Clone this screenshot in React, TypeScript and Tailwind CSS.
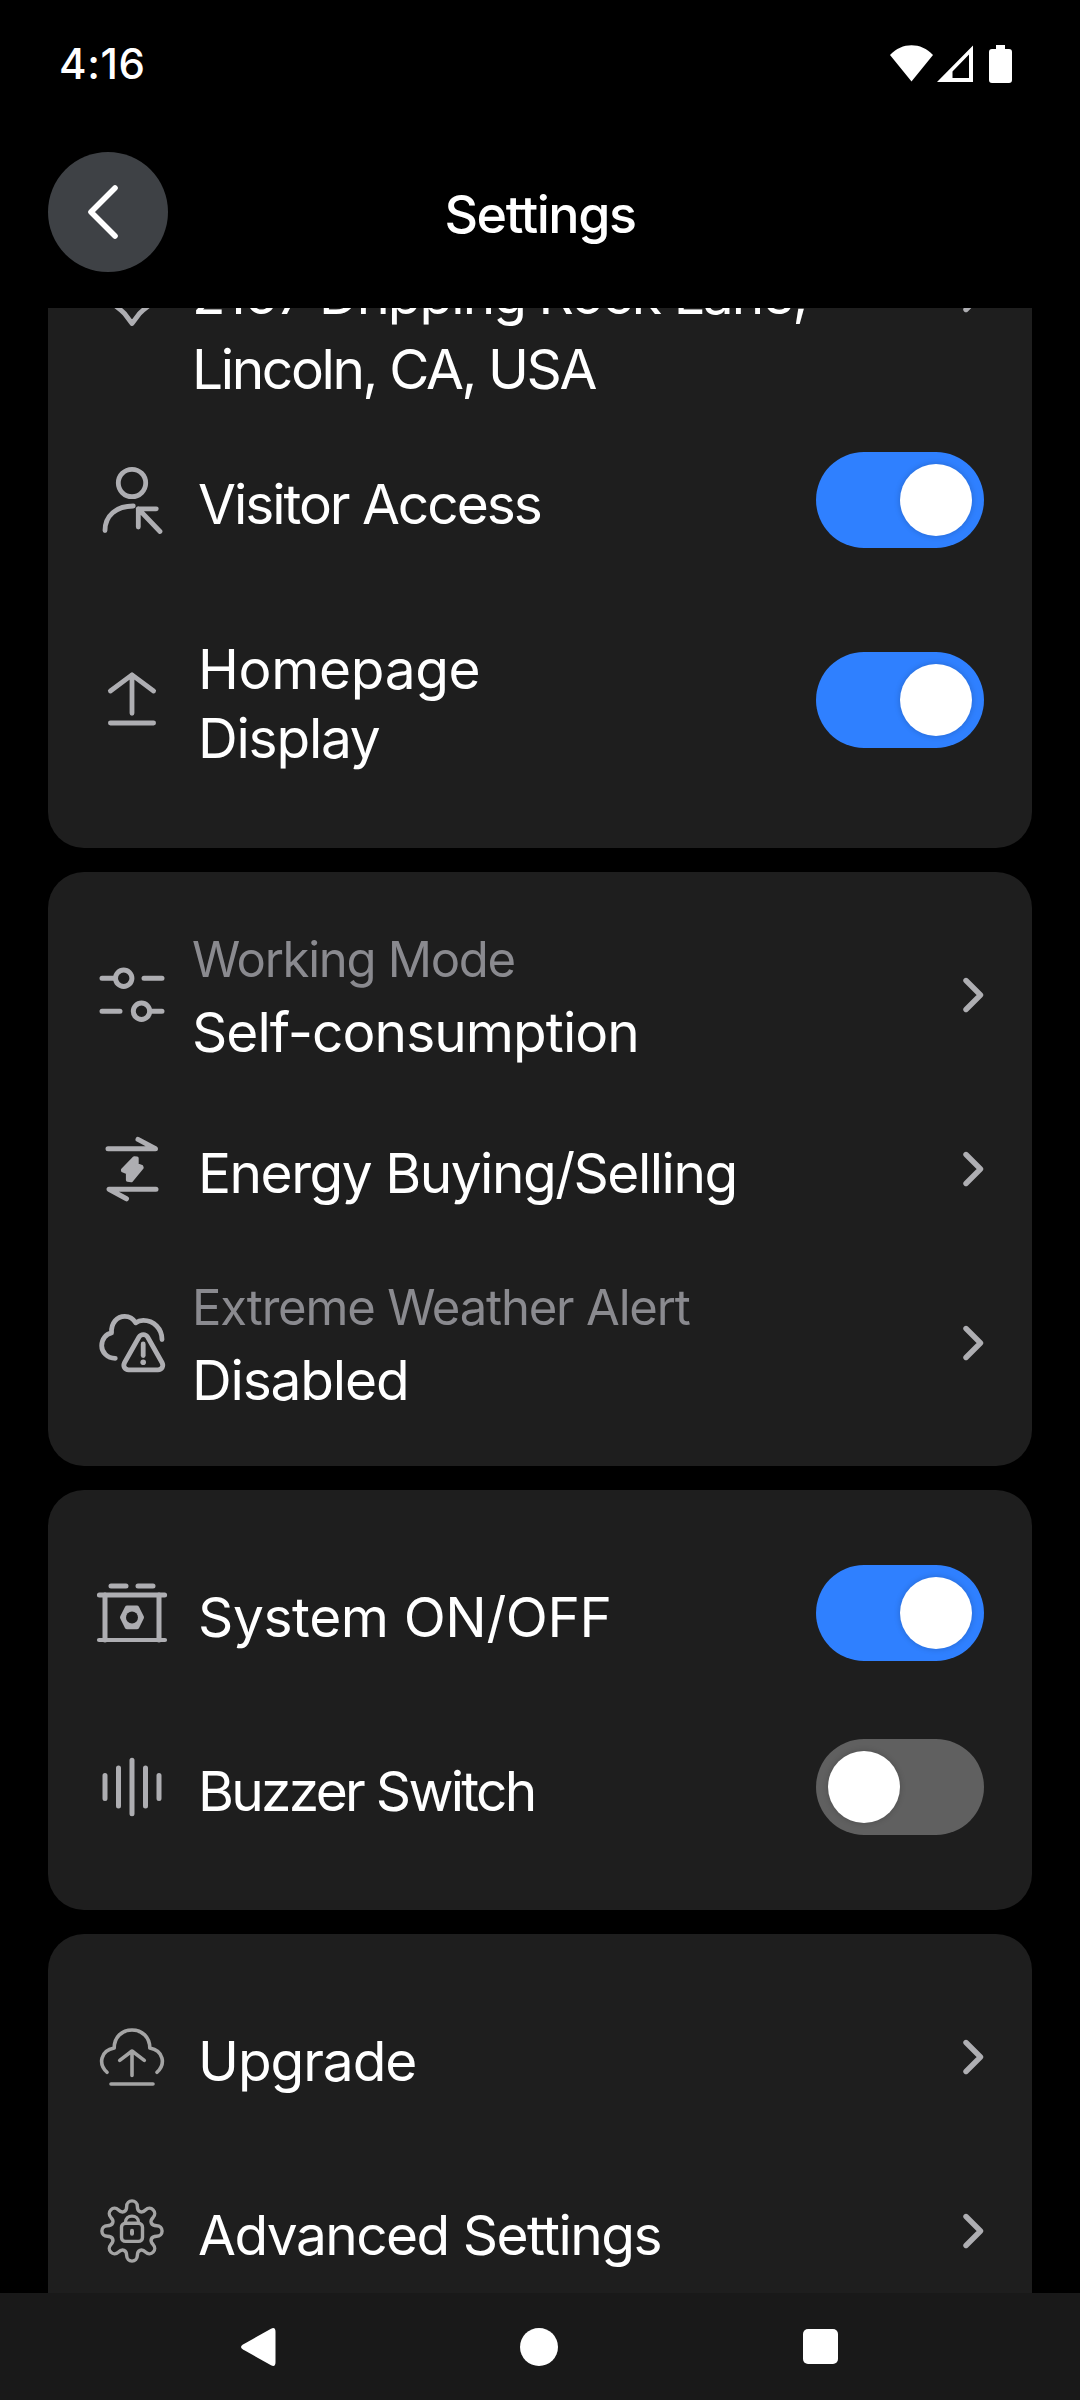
import { ReactNode, useState } from "react";
import clsx from "clsx";

interface IconProps {
  children: ReactNode;
  color?: string;
  width?: number;
}

function Icon({ children, color = "#aeaeb2", width = 4.8 }: IconProps) {
  return (
    <svg
      viewBox="0 0 72 72"
      className="size-[72px] shrink-0"
      fill="none"
      stroke={color}
      strokeWidth={width}
      strokeLinecap="round"
      strokeLinejoin="round"
    >
      {children}
    </svg>
  );
}

// eight rounded teeth around the centre of the 72px icon box
function gearPath() {
  const at = (x: number, y: number, step: number) => {
    const a = (step * Math.PI) / 4;
    const px = 36 + x * Math.cos(a) - y * Math.sin(a);
    const py = 36 + x * Math.sin(a) + y * Math.cos(a);
    return `${px.toFixed(2)} ${py.toFixed(2)}`;
  };
  let d = `M${at(-5.3, -24.8, 0)}`;
  for (let i = 0; i < 8; i++) {
    d += `A5.3 5.3 0 0 1 ${at(5.3, -24.8, i)}`;
    d += `C${at(5.3, -19, i)} ${at(-5.3, -19, i + 1)} ${at(-5.3, -24.8, i + 1)}`;
  }
  return d + "Z";
}

const PinIcon = () => (
  <Icon>
    <path d="M36 64.5L28.5 54.5Q25 51 19 46.5C5 32 14 8 36 8S67 32 53 46.5Q47 51 43.5 54.5Z" />
  </Icon>
);

const VisitorIcon = () => (
  <Icon>
    <circle cx="36" cy="19" r="13.7" />
    <path d="M9 66.5C9 52 20 42 37.3 42M42.3 63V44.8H60.3M42.3 44.8L64 67.5" />
  </Icon>
);

const HomepageIcon = () => (
  <Icon width={4.8}>
    <path d="M14.4 27L36 10.8L57.6 27M36 10.8V49.3M14.4 59H57.6" />
  </Icon>
);

const ModeIcon = () => (
  <Icon width={5}>
    <circle cx="27.7" cy="19.3" r="8.2" />
    <circle cx="45.5" cy="52.3" r="8.2" />
    <path d="M6 19.3H19M48 19.3H66M6 52.3H24M54 52.3H66" />
  </Icon>
);

const EnergyIcon = () => (
  <Icon width={5}>
    <path d="M12 15.7H59.5L42 6.4M60 56.3H13L30.5 65.8" />
    <path
      d="M38.2 25L41 25.2V31.8L45.6 33.6L46 34.6L35.3 47.6L31.6 47V39.8L26.8 37.8L26.6 37Z"
      fill="#aeaeb2"
      strokeWidth="3.4"
    />
  </Icon>
);

const WeatherIcon = () => (
  <Icon width={4.8}>
    <path d="M19.3 51.3C11 51.3 5.7 45 5.7 38.7C5.7 32 10 27 15.5 25.8C15 16 21 9.3 28.8 9.3C33.5 9.3 37.5 12 39.7 15.8C42 14 44.5 13.4 47.3 13.4C58 13.4 66 22 66 32.5" />
    <path d="M43 30L28.6 55.5C26.6 59.2 28.8 62.8 32.6 62.8H62C65.8 62.8 68 59.2 66 55.5L51.6 30C49.6 26.8 45 26.8 43 30Z" />
    <path d="M47.2 37V48.5" />
    <circle cx="47.2" cy="55.2" r="2.8" fill="#aeaeb2" stroke="none" />
  </Icon>
);

const SystemIcon = () => (
  <Icon width={5}>
    <path d="M15 9H30M42 9H57M3.4 18H68.6" />
    <path d="M9 18V63M63 18V63" />
    <path d="M3 63H69" strokeWidth="4.2" />
    <path
      d="M31.2 31H40.8L45.5 40.4L40.8 49.8H31.2L26.5 40.4Z"
      fill="#aeaeb2"
    />
    <circle cx="36" cy="40.4" r="6" fill="#1e1e1e" stroke="none" />
  </Icon>
);

const BuzzerIcon = () => (
  <Icon width={5}>
    <path d="M9 24.5V47.5M22.5 17V55M36 9.3V62.7M49.5 17V55M63 24.5V47.5" />
  </Icon>
);

const UpgradeIcon = () => (
  <Icon color="#a4a4a4" width={3.6}>
    <path d="M11 51.3C2 43 4.5 29.5 18.2 27C18.2 16 26 9 36 9S53.8 16 53.8 27C67.5 29.5 70 43 61 51.3" />
    <path d="M23.7 39.4L36 30L48.3 39.4M36 30.5V54.5M15 63H57" />
  </Icon>
);

const AdvancedIcon = () => (
  <Icon color="#a4a4a4" width={3.4}>
    <path d={gearPath()} />
    <rect x="25.5" y="28.2" width="21" height="18.2" rx="4" />
    <path d="M29.3 28C29.3 18.8 42.7 18.8 42.7 28" />
    <path d="M36 35.8V38.8" strokeWidth="4" />
  </Icon>
);

function Chevron() {
  return (
    <svg
      viewBox="0 0 24 40"
      className="h-10 w-6 shrink-0"
      fill="none"
      stroke="#aeaeb2"
      strokeWidth="5.4"
      strokeLinecap="round"
      strokeLinejoin="round"
    >
      <path d="M6 5.5L20.5 20L6 34.5" />
    </svg>
  );
}

function Toggle({ initial }: { initial: boolean }) {
  const [on, setOn] = useState(initial);

  return (
    <button
      type="button"
      role="switch"
      aria-checked={on}
      onClick={() => setOn(!on)}
      className={clsx(
        "flex h-24 w-[168px] shrink-0 items-center rounded-full px-3",
        on ? "justify-end bg-[#2f80ff]" : "justify-start bg-[#606060]"
      )}
    >
      <span className="size-[72px] rounded-full bg-white shadow-[0_0_6px_rgba(0,0,0,0.2)]" />
    </button>
  );
}

interface RowProps {
  icon: ReactNode;
  children: ReactNode;
  label?: ReactNode;
  action?: ReactNode;
  className?: string;
}

function Row({ icon, children, label, action, className = "h-[174px]" }: RowProps) {
  return (
    <div className={clsx("flex items-center", className)}>
      {icon}
      {label ? (
        <div className="flex-1 pt-1 pl-6 text-[55px] leading-[75px]">
          <div className="text-[49px] leading-[70px] text-[#8a8a8f]">{label}</div>
          {children}
        </div>
      ) : (
        <div className="flex-1 pt-2 pl-[30px] text-[55px] leading-[69px]">{children}</div>
      )}
      {action || <Chevron />}
    </div>
  );
}

function Card({ children, className }: { children: ReactNode; className?: string }) {
  return (
    <section className={clsx("shrink-0 rounded-[36px] bg-[#1e1e1e] px-12 py-9", className)}>
      {children}
    </section>
  );
}

export default function App() {
  return (
    <div className="flex h-[2400px] w-[1080px] flex-col overflow-hidden bg-black font-['Inter',sans-serif] text-white">
      <div className="flex h-32 shrink-0 items-center justify-between pr-[68px] pl-[59px]">
        <span className="text-[42px] leading-[60px] font-medium tracking-[0.015em]">4:16</span>
        <svg viewBox="0 0 122 38" className="h-[38px] w-[122px]" fill="#fff">
          <path d="M0 10C12-3 31-3 43 10L21.5 36.5Z" />
          <path d="M83 .5V37H47ZM79 9.5L62.5 26.5V33H79Z" fillRule="evenodd" />
          <path d="M106 0H115V4H119Q122 4 122 7V35Q122 38 119 38H102Q99 38 99 35V7Q99 4 102 4H106Z" />
        </svg>
      </div>

      <header className="grid h-[180px] shrink-0 grid-cols-[120px_1fr_120px] items-start px-12 pt-6">
        <button type="button" className="flex size-[120px] items-center justify-center rounded-full bg-[#3e4145]">
          <svg
            viewBox="0 0 60 60"
            className="size-[60px]"
            fill="none"
            stroke="#fff"
            strokeWidth="5.6"
            strokeLinecap="round"
            strokeLinejoin="round"
          >
            <path d="M37 6L13 30L37 54" />
          </svg>
        </button>
        <h1 className="pt-[31px] text-center text-[52px] font-medium leading-[64px] tracking-[-0.028em]">
          Settings
        </h1>
      </header>

      <main className="flex min-h-0 flex-1 flex-col gap-6 overflow-hidden px-12">
        {/* scrolled up, so the address row starts behind the header */}
        <Card className="-mt-[167px] h-[707px]">
          <Row icon={<PinIcon />} label={"\u00a0"} className="h-[236px]">
            <p className="w-[640px] whitespace-nowrap">
              <span className="tracking-[-0.035em]">2167 Dripping Rock Lane,</span>
              <br />
              <span className="tracking-[-0.043em]">Lincoln, CA, USA</span>
            </p>
          </Row>
          <Row icon={<VisitorIcon />} action={<Toggle initial={true} />}>
            <span className="tracking-[-0.037em]">Visitor Access</span>
          </Row>
          <Row icon={<HomepageIcon />} action={<Toggle initial={true} />} className="h-[226px]">
            <span className="tracking-[-0.006em]">Homepage</span>
            <br />
            <span className="tracking-[-0.022em]">Display</span>
          </Row>
        </Card>

        <Card>
          <Row icon={<ModeIcon />} label={<span className="tracking-[-0.026em]">Working Mode</span>}>
            <span className="tracking-[-0.017em]">Self-consumption</span>
          </Row>
          <Row icon={<EnergyIcon />}>
            <span className="tracking-[-0.027em]">Energy Buying/Selling</span>
          </Row>
          <Row
            icon={<WeatherIcon />}
            label={<span className="tracking-[-0.024em]">Extreme Weather Alert</span>}
          >
            <span className="tracking-[-0.021em]">Disabled</span>
          </Row>
        </Card>

        <Card>
          <Row icon={<SystemIcon />} action={<Toggle initial={true} />}>
            <span className="tracking-[-0.007em]">System ON/OFF</span>
          </Row>
          <Row icon={<BuzzerIcon />} action={<Toggle initial={false} />}>
            <span className="tracking-[-0.049em]">Buzzer Switch</span>
          </Row>
        </Card>

        <Card>
          <Row icon={<UpgradeIcon />}>
            <span className="tracking-[-0.019em]">Upgrade</span>
          </Row>
          <Row icon={<AdvancedIcon />}>
            <span className="tracking-[-0.028em]">Advanced Settings</span>
          </Row>
        </Card>
      </main>

      <nav className="grid h-[107px] shrink-0 grid-cols-3 items-center bg-[#191919] pr-[119px] pl-[117px]">
        <svg viewBox="0 0 38 38" className="size-[38px] justify-self-center" fill="#fff">
          <path d="M32 .8Q36.5 -1.5 36.5 4V34Q36.5 39.5 32 37.2L4 21.5Q0 19 4 16.5Z" />
        </svg>
        <span className="size-[38px] justify-self-center rounded-full bg-white" />
        <span className="size-[35px] justify-self-center rounded-[5px] bg-white" />
      </nav>
    </div>
  );
}
